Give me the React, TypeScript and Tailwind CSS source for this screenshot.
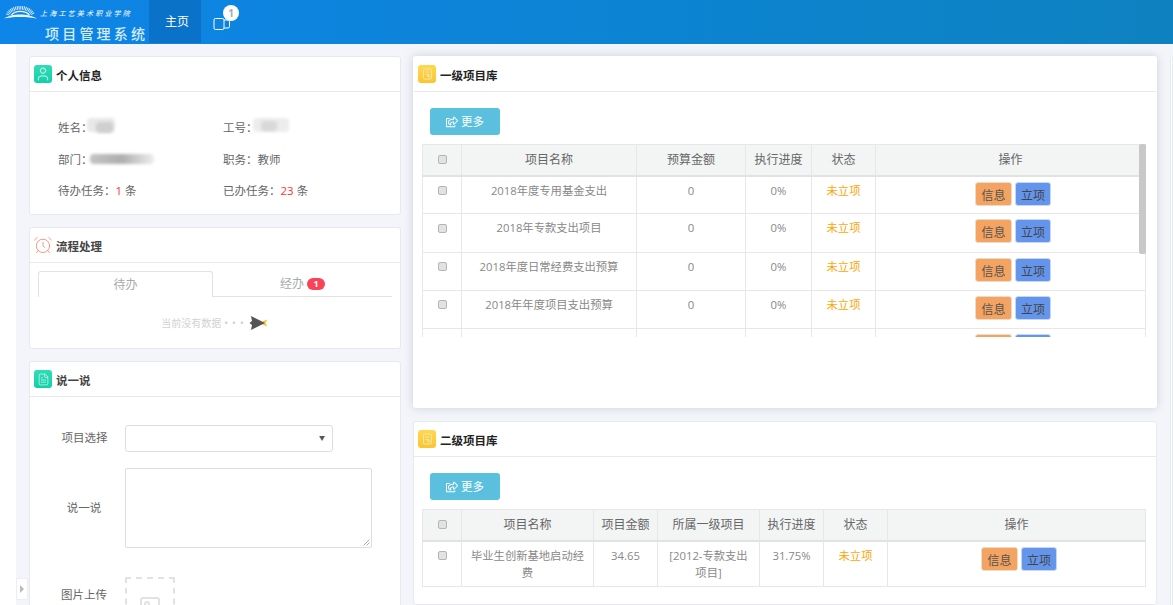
import { AlarmClock, FileText, Image, User } from 'lucide-react';
import { ReactNode } from 'react';
import { FaRegShareSquare } from 'react-icons/fa';

const firstLevel = ['2018年度专用基金支出', '2018年专款支出项目', '2018年度日常经费支出预算', '2018年年度项目支出预算', '2018年度其他支出预算'];

const cell = 'border border-[#e7e7e7] px-2 pt-[5px] pb-[5px] align-top text-center text-[11.3px] text-[#888] leading-[17px]';
const headCell = 'border border-[#e7e7e7] border-b-2 border-b-[#e2e2e2] bg-[#f3f5f5] h-[31px] px-1 text-center font-normal text-[#666]';

const Check = () => (
  <span className="inline-block w-[9px] h-[9px] -mt-[2px] rounded-[2px] border border-[#b5b5b5] bg-[#e2e2e2] align-middle" />
);

const Actions = () => (
  <div className="flex justify-center gap-[3px] pl-[5px]">
    <button className="w-[37px] h-[24px] rounded-[3px] border border-[#e6dcd0] bg-[#f4a460] text-[12px] leading-[26px] text-[#555]">信息</button>
    <button className="w-[36px] h-[24px] rounded-[3px] border border-[#c9d6ee] bg-[#6495ed] text-[12px] leading-[26px] text-[#444]">立项</button>
  </div>
);

const Card = ({ icon, title, children, strong, className }: { icon: ReactNode; title: string; children: ReactNode; strong?: boolean; className?: string }) => (
  <section className={`bg-white border rounded-[3px] ${className ?? 'border-[#e7eaec]'}`}>
    <header className="h-[35px] border-b border-[#e7eaec] flex items-center pl-1 gap-1">
      {icon}
      <h2 className={`pt-[3px] text-[11.5px] font-bold ${strong ? 'text-[#222]' : 'text-[#444]'}`}>{title}</h2>
    </header>
    {children}
  </section>
);

const TealIcon = ({ children }: { children: ReactNode }) => (
  <span className="w-[18px] h-[18px] rounded-[3px] bg-gradient-to-b from-[#2fdcb8] to-[#0fd0a8] flex items-center justify-center text-white">{children}</span>
);

const BookIcon = () => (
  <span className="w-[18px] h-[18px] rounded-[3px] bg-gradient-to-b from-[#ffd84f] to-[#fbc531] flex items-center justify-center">
    <svg width="11" height="12" viewBox="0 0 11 12" fill="none" stroke="#f5e6a8" strokeWidth="1">
      <rect x="1.5" y="1" width="8" height="10" rx="1" />
      <path d="M3.5 4h4M3.5 6.5h2.5" />
      <circle cx="6.8" cy="8" r="1.2" />
    </svg>
  </span>
);

const Blur = ({ className }: { className: string }) => <span className={`inline-block rounded-sm blur-[1.5px] ${className}`} />;

const MoreButton = () => (
  <button className="w-[70px] h-[27px] rounded-[3px] bg-[#5bc0de] text-white text-[11.5px] flex items-center justify-center gap-[3px]">
    <FaRegShareSquare className="w-[12px] h-[12px]" />
    更多
  </button>
);

const Rocket = () => (
  <svg width="19" height="16" viewBox="0 0 19 16">
    <path d="M14 6 L18.5 4.5 L16.5 8 L18.5 11.5 L14 10 Z" fill="#f5c842" />
    <path d="M0.5 8 L3 6 L2 1 L8 4 L16 8 L8 12 L2 15 L3 10 Z" fill="#555" />
  </svg>
);

export default function App() {
  return (
    <div className="w-[1173px] h-[605px] overflow-hidden bg-white font-['Open_Sans','Noto_Sans_CJK_SC',sans-serif] text-[12px] text-[#666]">
      <nav className="h-[44px] flex bg-gradient-to-r from-[#0e85e8] to-[#0e82c0] text-white">
        <div className="w-[149px] pl-[3px] pt-[2px]">
          <div className="flex items-center h-[22px] gap-[3px]">
            <svg width="34" height="16" viewBox="0 0 36 16" fill="none">
              <path d="M1 14 C8 8 28 8 36 14 C28 11.5 8 11.5 1 14 Z" fill="#e8f5ff" />
              <path d="M5 10 C9 0 27 0 32 10" stroke="#d8edff" strokeWidth="4" strokeDasharray="1 0.8" />
              <path d="M9 10 C13 5 23 5 28 10" stroke="#ffffff" strokeWidth="1.5" />
            </svg>
            <span className="text-[7px] tracking-[2.2px] italic whitespace-nowrap font-['Noto_Sans_CJK_SC',sans-serif]">上海工艺美术职业学院</span>
          </div>
          <div className="pl-[42px] text-[14px] leading-[18px] font-medium tracking-[3.2px] whitespace-nowrap text-[#d5ecff] font-['Noto_Sans_CJK_SC',sans-serif]">项目管理系统</div>
        </div>
        <a className="w-[52px] h-[43px] bg-[#0a72c9] flex items-center justify-center pl-[4px] text-[12px]">主页</a>
        <div className="relative w-[44px] flex items-center justify-center">
          <svg width="18" height="15" viewBox="0 0 17 15" fill="none" stroke="#fff" strokeWidth="1" className="mt-[3px] ml-[-3px]">
            <rect x="0.5" y="2.5" width="10" height="11" rx="1.5" />
            <path d="M10.5 4h4a1.5 1.5 0 0 1 1.5 1.5v5a1.5 1.5 0 0 1-1.5 1.5h-4" />
          </svg>
          <span className="absolute left-[22px] top-[5px] w-[16px] h-[16px] rounded-full bg-white text-[#aaa] text-[10px] font-bold leading-[16px] text-center">1</span>
        </div>
      </nav>

      <main className="relative flex h-[561px] ml-[16px] bg-[#f3f5fa] pl-[13px] pt-[12px] gap-[12px] overflow-hidden">
        <div className="w-[372px] shrink-0 flex flex-col gap-[12px]">
          <Card icon={<TealIcon><User size={16} strokeWidth={1.2} /></TealIcon>} title="个人信息" strong>
            <div className="grid grid-cols-[165px_1fr] pl-[28px] pt-[26px] pb-[14.5px] gap-y-[14px] text-[11.5px] leading-[17.5px] text-[#666]">
              <div className="flex items-center">姓名：
                <span className="relative -ml-[6px]">
                  <Blur className="block w-[28px] h-[14px] bg-[#e8e8e8]" />
                  <Blur className="absolute left-[9px] top-[4px] w-[17px] h-[11px] bg-[#cfcfcf]" />
                </span>
              </div>
              <div className="flex items-center">工号：
                <span className="relative -ml-[5px]">
                  <Blur className="block w-[36px] h-[14px] bg-[#ececec]" />
                  <Blur className="absolute left-[8px] top-[3px] w-[16px] h-[10px] bg-[#d8d8d8]" />
                </span>
              </div>
              <div className="flex items-center">部门：
                <Blur className="w-[64px] h-[10px] bg-gradient-to-r from-[#c4c4c4] via-[#aeaeae] to-[#eeeeee] -ml-[3px]" />
              </div>
              <div>职务：教师</div>
              <div>待办任务：<span className="text-[#f33]">1</span> 条</div>
              <div>已办任务：<span className="text-[#f33]">23</span> 条</div>
            </div>
          </Card>

          <Card icon={<AlarmClock size={20} strokeWidth={1.1} className="text-[#f98b7a] -ml-[1px] -mr-[1px]" />} title="流程处理">
            <div className="h-[85px] px-[8px] pt-[8px]">
              <div className="flex w-[354px] h-[26px] border-b border-[#e2e2e2] text-[#aaa]">
                <div className="w-[175px] h-[26px] -mb-px bg-white border border-b-0 border-[#e2e2e2] rounded-t-[3px] flex items-center justify-center">待办</div>
                <div className="flex-1 flex items-center justify-center gap-[3px]">
                  经办
                  <span className="w-[18px] h-[12px] rounded-full bg-[#fb4358] text-white text-[9px] font-bold leading-[12px] text-center">1</span>
                </div>
              </div>
              <div className="flex items-center justify-center h-[50px] pt-[2px] pr-[1px] text-[10px] text-[#d2d2d2]">
                当前没有数据
                <span className="ml-[3px] mr-[1px] tracking-[4px] text-[#ccc]">•••</span>
                <Rocket />
              </div>
            </div>
          </Card>

          <Card icon={<TealIcon><FileText size={13} strokeWidth={1.1} /></TealIcon>} title="说一说" className="flex-1 border-[#e7eaec]">
            <div className="pt-[27px] pl-[10px] text-[11.5px]">
              <div className="flex items-center h-[28px]">
                <label className="w-[85px] pl-[4px] text-center">项目选择</label>
                <div className="w-[208px] h-[27px] border border-[#ddd] rounded-[3px] flex items-center justify-end pr-[7px] text-[6px] text-[#555]">▼</div>
              </div>
              <div className="flex items-center h-[80px] mt-[16px]">
                <label className="w-[85px] pl-[3px] text-center">说一说</label>
                <div className="relative w-[247px] h-[80px] border border-[#ddd] rounded-[2px]">
                  <svg className="absolute right-[1px] bottom-[1px]" width="7" height="7" viewBox="0 0 7 7" stroke="#999" strokeWidth="0.8">
                    <path d="M0.5 6.5 L6.5 0.5 M3.5 6.5 L6.5 3.5" />
                  </svg>
                </div>
              </div>
              <div className="flex items-start mt-[29px]">
                <label className="w-[85px] pl-[3px] pt-[9px] text-center">图片上传</label>
                <div className="w-[50px] h-[60px] border-2 border-dashed border-[#e2e2e2] flex items-center justify-center">
                  <Image size={24} strokeWidth={2} className="text-[#e2e2e2]" />
                </div>
              </div>
            </div>
          </Card>
        </div>

        <div className="w-[744px] shrink-0 flex flex-col gap-[13px]">
          <Card icon={<BookIcon />} title="一级项目库" strong className="h-[352px] border-transparent shadow-[0_0_10px_rgba(130,140,160,0.35)]">
            <div className="px-[8px] pt-[16px]">
              <div className="pl-[8px]"><MoreButton /></div>
              <div className="relative h-[193px] mt-[9px] overflow-hidden w-[724px]">
                <table className="w-[724px] table-fixed border-collapse">
                  <colgroup>
                    <col className="w-[39px]" /><col className="w-[175px]" /><col className="w-[109px]" /><col className="w-[66px]" /><col className="w-[64px]" /><col />
                  </colgroup>
                  <thead>
                    <tr>
                      <th className={headCell}><Check /></th>
                      <th className={headCell}>项目名称</th>
                      <th className={headCell}>预算金额</th>
                      <th className={headCell}>执行进度</th>
                      <th className={headCell}>状态</th>
                      <th className={headCell}>操作</th>
                    </tr>
                  </thead>
                  <tbody>
                    {firstLevel.map((name) => (
                      <tr key={name} className="h-[38.34px]">
                        <td className={cell}><Check /></td>
                        <td className={cell}>{name}</td>
                        <td className={cell}>0</td>
                        <td className={cell}>0%</td>
                        <td className={`${cell} !text-[#ffa500]`}>未立项</td>
                        <td className={cell}><Actions /></td>
                      </tr>
                    ))}
                  </tbody>
                </table>
                <div className="absolute right-0 top-0 w-[7px] h-[110px] rounded-[2px] bg-[#c8c8c8]" />
              </div>
            </div>
          </Card>

          <Card icon={<BookIcon />} title="二级项目库" strong className="flex-1 border-[#e7eaec]">
            <div className="px-[8px] pt-[16px]">
              <div className="pl-[8px]"><MoreButton /></div>
              <table className="mt-[9px] w-[724px] table-fixed border-collapse">
                <colgroup>
                  <col className="w-[39px]" /><col className="w-[132px]" /><col className="w-[64px]" /><col className="w-[102px]" /><col className="w-[64px]" /><col className="w-[64px]" /><col />
                </colgroup>
                <thead>
                  <tr>
                    <th className={headCell}><Check /></th>
                    <th className={headCell}>项目名称</th>
                    <th className={headCell}>项目金额</th>
                    <th className={headCell}>所属一级项目</th>
                    <th className={headCell}>执行进度</th>
                    <th className={headCell}>状态</th>
                    <th className={headCell}>操作</th>
                  </tr>
                </thead>
                <tbody>
                  <tr>
                    <td className={cell}><Check /></td>
                    <td className={cell}>毕业生创新基地启动经费</td>
                    <td className={cell}>34.65</td>
                    <td className={cell}>[2012-专款支出项目]</td>
                    <td className={cell}>31.75%</td>
                    <td className={`${cell} !text-[#ffa500]`}>未立项</td>
                    <td className={cell}><Actions /></td>
                  </tr>
                </tbody>
              </table>
            </div>
          </Card>
        </div>

        <div className="flex-1 bg-white border border-[#e7eaec] rounded-[3px] h-[600px] ml-[1px]" />
      </main>

      <button className="absolute left-[16px] top-[578px] w-[12px] h-[22px] bg-white border border-[#eceef3] flex items-center justify-center">
        <span className="w-0 h-0 border-y-[4px] border-y-transparent border-l-[4px] border-l-[#bbb]" />
      </button>
    </div>
  );
}
